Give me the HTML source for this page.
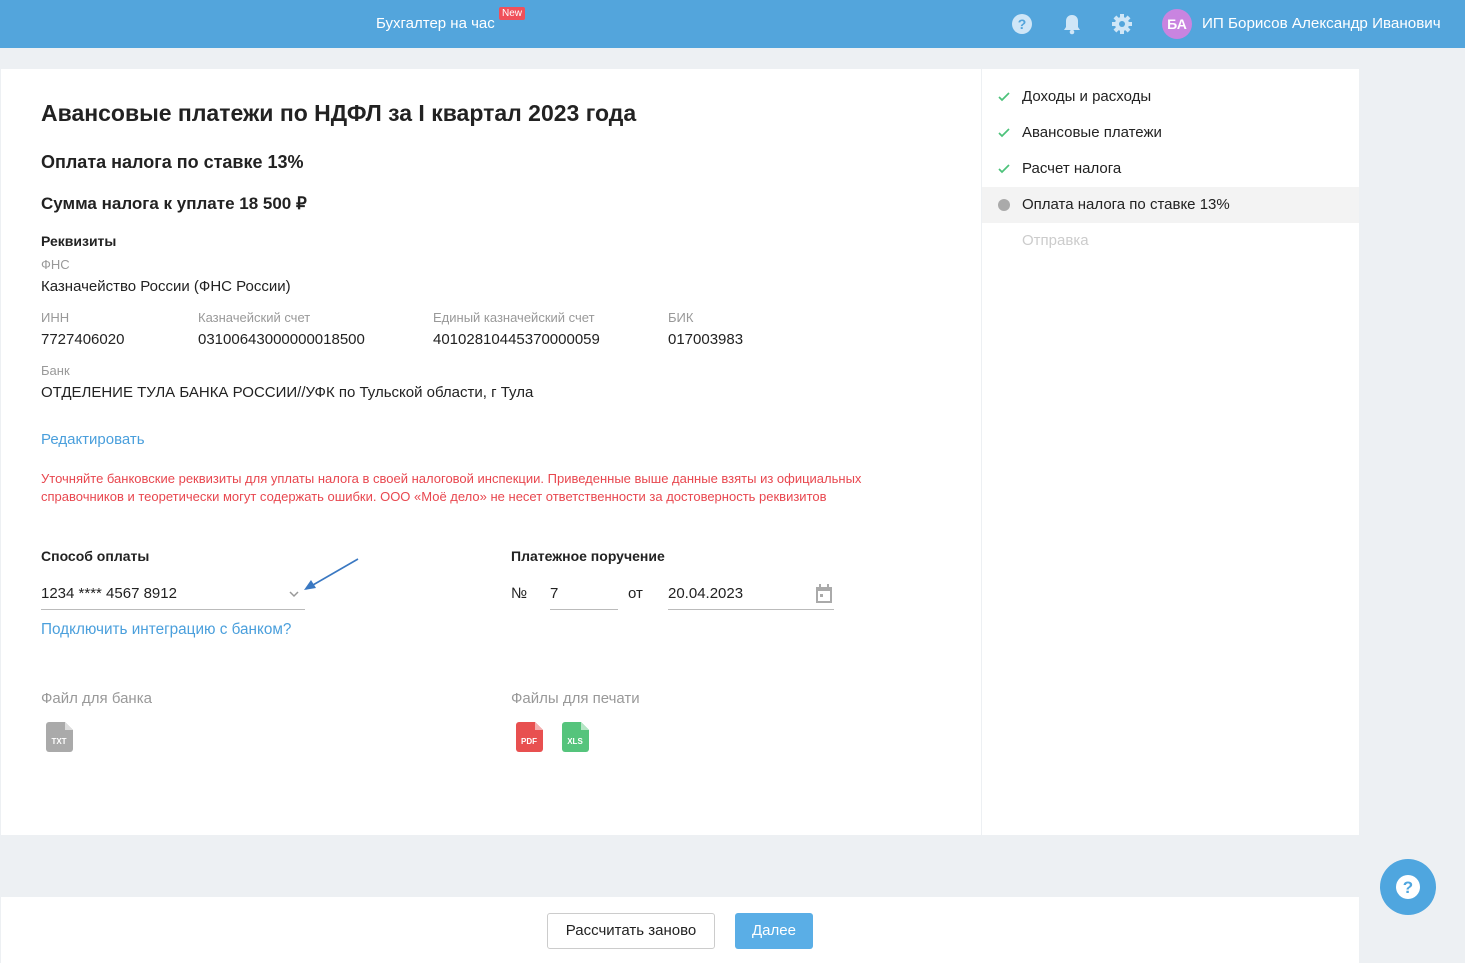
<!DOCTYPE html>
<html><head><meta charset="utf-8"><style>
*{margin:0;padding:0;box-sizing:border-box}
body{width:1465px;height:963px;background:#edf0f3;font-family:"Liberation Sans",sans-serif;color:#222;position:relative;overflow:hidden;font-size:15px}
.a{position:absolute;white-space:nowrap}
.lbl{color:#999;font-size:13px}
.bold{font-weight:bold;font-size:14px}
.link{color:#4a9fdc}
</style></head><body>
<div class="a" style="left:0;top:0;width:1465px;height:48px;background:#53a5dc">
 <div class="a" style="left:376px;top:15px;color:#fff;font-size:15px">Бухгалтер на час</div>
 <div class="a" style="left:499px;top:7px;background:#f0505a;color:#fff;font-size:10px;padding:1px 3px;border-radius:2px">New</div>
 <svg class="a" style="left:1011px;top:13px" width="22" height="22" viewBox="0 0 22 22"><circle cx="11" cy="11" r="10" fill="#cfe6f7"/><text x="11" y="16" font-size="14" font-weight="bold" text-anchor="middle" fill="#53a5dc" font-family="Liberation Sans">?</text></svg>
 <svg class="a" style="left:1062px;top:13px" width="20" height="22" viewBox="0 0 20 22"><path d="M10 2c-4 0-6 3-6 6v6l-2 3h16l-2-3V8c0-3-2-6-6-6z" fill="#cfe6f7"/><circle cx="10" cy="19" r="2.3" fill="#cfe6f7"/></svg>
 <svg class="a" style="left:1111px;top:13px" width="22" height="22" viewBox="0 0 22 22"><g fill="#cfe6f7"><circle cx="11" cy="11" r="7"/><rect x="9" y="1" width="4" height="20"/><rect x="9" y="1" width="4" height="20" transform="rotate(45 11 11)"/><rect x="9" y="1" width="4" height="20" transform="rotate(90 11 11)"/><rect x="9" y="1" width="4" height="20" transform="rotate(135 11 11)"/></g><circle cx="11" cy="11" r="3" fill="#53a5dc"/></svg>
 <div class="a" style="left:1162px;top:9px;width:30px;height:30px;border-radius:50%;background:#c984e0;color:#fff;font-weight:bold;font-size:14px;text-align:center;line-height:30px">БА</div>
 <div class="a" style="left:1202px;top:15px;color:#fff;font-size:15.2px">ИП Борисов Александр Иванович</div>
</div>

<div class="a" style="left:1px;top:69px;width:980px;height:766px;background:#fff"></div>
<div class="a" style="left:982px;top:69px;width:377px;height:766px;background:#fff"></div>
<div class="a" style="left:982px;top:187px;width:377px;height:36px;background:#f3f3f3"></div>

<div class="a" style="left:41px;top:100px;font-size:23px;font-weight:bold">Авансовые платежи по НДФЛ за I квартал 2023 года</div>
<div class="a" style="left:41px;top:152px;font-size:18px;font-weight:bold">Оплата налога по ставке 13%</div>
<div class="a" style="left:41px;top:194px;font-size:17px;font-weight:bold">Сумма налога к уплате 18 500 ₽</div>
<div class="a bold" style="left:41px;top:233px">Реквизиты</div>
<div class="a lbl" style="left:41px;top:257px">ФНС</div>
<div class="a" style="left:41px;top:278px">Казначейство России (ФНС России)</div>
<div class="a lbl" style="left:41px;top:310px">ИНН</div>
<div class="a lbl" style="left:198px;top:310px">Казначейский счет</div>
<div class="a lbl" style="left:433px;top:310px">Единый казначейский счет</div>
<div class="a lbl" style="left:668px;top:310px">БИК</div>
<div class="a" style="left:41px;top:331px">7727406020</div>
<div class="a" style="left:198px;top:331px">03100643000000018500</div>
<div class="a" style="left:433px;top:331px">40102810445370000059</div>
<div class="a" style="left:668px;top:331px">017003983</div>
<div class="a lbl" style="left:41px;top:363px">Банк</div>
<div class="a" style="left:41px;top:384px">ОТДЕЛЕНИЕ ТУЛА БАНКА РОССИИ//УФК по Тульской области, г Тула</div>
<div class="a link" style="left:41px;top:431px">Редактировать</div>
<div class="a" style="left:41px;top:470px;color:#e8474f;font-size:13px;line-height:18px">Уточняйте банковские реквизиты для уплаты налога в своей налоговой инспекции. Приведенные выше данные взяты из официальных<br>справочников и теоретически могут содержать ошибки. ООО «Моё дело» не несет ответственности за достоверность реквизитов</div>

<div class="a bold" style="left:41px;top:548px">Способ оплаты</div>
<div class="a" style="left:41px;top:585px">1234 **** 4567 8912</div>
<div class="a" style="left:41px;top:609px;width:264px;height:1px;background:#bbb"></div>
<svg class="a" style="left:289px;top:590px" width="10" height="8"><path d="M1 2l4 4 4-4" stroke="#999" stroke-width="1.5" fill="none"/></svg>
<svg class="a" style="left:300px;top:557px" width="62" height="36"><path d="M58 2L6 32" stroke="#3a78c2" stroke-width="1.6"/><path d="M4 33l12-2-5-8z" fill="#3a78c2"/></svg>
<div class="a link" style="left:41px;top:621px;font-size:15.3px">Подключить интеграцию с банком?</div>

<div class="a bold" style="left:511px;top:548px">Платежное поручение</div>
<div class="a" style="left:511px;top:585px">№</div>
<div class="a" style="left:550px;top:585px">7</div>
<div class="a" style="left:550px;top:609px;width:68px;height:1px;background:#bbb"></div>
<div class="a" style="left:628px;top:585px">от</div>
<div class="a" style="left:668px;top:585px">20.04.2023</div>
<div class="a" style="left:668px;top:609px;width:166px;height:1px;background:#bbb"></div>
<svg class="a" style="left:815px;top:584px" width="18" height="20"><rect x="1" y="3" width="16" height="16" fill="#aaa"/><rect x="3" y="7" width="12" height="10" fill="#fff"/><rect x="4" y="0" width="2" height="5" fill="#aaa"/><rect x="12" y="0" width="2" height="5" fill="#aaa"/><rect x="5" y="10" width="3" height="3" fill="#aaa"/></svg>

<div class="a" style="left:41px;top:690px;color:#999">Файл для банка</div>
<div class="a" style="left:511px;top:690px;color:#999">Файлы для печати</div>
<svg class="a" style="left:46px;top:722px" width="27" height="30"><path d="M0 3a3 3 0 0 1 3-3h16l8 8v19a3 3 0 0 1-3 3H3a3 3 0 0 1-3-3z" fill="#aaa"/><path d="M19 0v8h8z" fill="#ddd"/><text x="13" y="22" font-size="8" font-weight="bold" fill="#fff" text-anchor="middle" font-family="Liberation Sans">TXT</text></svg>
<svg class="a" style="left:516px;top:722px" width="27" height="30"><path d="M0 3a3 3 0 0 1 3-3h16l8 8v19a3 3 0 0 1-3 3H3a3 3 0 0 1-3-3z" fill="#e85050"/><path d="M19 0v8h8z" fill="#f4b0b0"/><text x="13" y="22" font-size="8" font-weight="bold" fill="#fff" text-anchor="middle" font-family="Liberation Sans">PDF</text></svg>
<svg class="a" style="left:562px;top:722px" width="27" height="30"><path d="M0 3a3 3 0 0 1 3-3h16l8 8v19a3 3 0 0 1-3 3H3a3 3 0 0 1-3-3z" fill="#55c47c"/><path d="M19 0v8h8z" fill="#b5e6c5"/><text x="13" y="22" font-size="8" font-weight="bold" fill="#fff" text-anchor="middle" font-family="Liberation Sans">XLS</text></svg>

<svg class="a" style="left:997px;top:91px" width="14" height="12"><path d="M2 6l3 3 7-7" stroke="#4cc27a" stroke-width="1.7" fill="none"/></svg>
<svg class="a" style="left:997px;top:127px" width="14" height="12"><path d="M2 6l3 3 7-7" stroke="#4cc27a" stroke-width="1.7" fill="none"/></svg>
<svg class="a" style="left:997px;top:163px" width="14" height="12"><path d="M2 6l3 3 7-7" stroke="#4cc27a" stroke-width="1.7" fill="none"/></svg>
<div class="a" style="left:998px;top:199px;width:12px;height:12px;border-radius:50%;background:#aaa"></div>
<div class="a" style="left:1022px;top:88px">Доходы и расходы</div>
<div class="a" style="left:1022px;top:124px">Авансовые платежи</div>
<div class="a" style="left:1022px;top:160px">Расчет налога</div>
<div class="a" style="left:1022px;top:196px">Оплата налога по ставке 13%</div>
<div class="a" style="left:1022px;top:232px;color:#ccc">Отправка</div>

<div class="a" style="left:1px;top:897px;width:1358px;height:66px;background:#fff"></div>
<div class="a" style="left:547px;top:913px;width:168px;height:36px;border:1px solid #ccc;border-radius:3px;text-align:center;line-height:34px">Рассчитать заново</div>
<div class="a" style="left:735px;top:913px;width:78px;height:36px;background:#5aaee6;color:#fff;border-radius:3px;text-align:center;line-height:36px;font-size:15px">Далее</div>
<div class="a" style="left:1380px;top:859px;width:56px;height:56px;border-radius:50%;background:#4fa6df"></div>
<svg class="a" style="left:1395px;top:874px" width="26" height="26"><circle cx="13" cy="13" r="12" fill="#fff"/><text x="13" y="19" font-size="17" font-weight="bold" text-anchor="middle" fill="#4fa6df" font-family="Liberation Sans">?</text></svg>
</body></html>
